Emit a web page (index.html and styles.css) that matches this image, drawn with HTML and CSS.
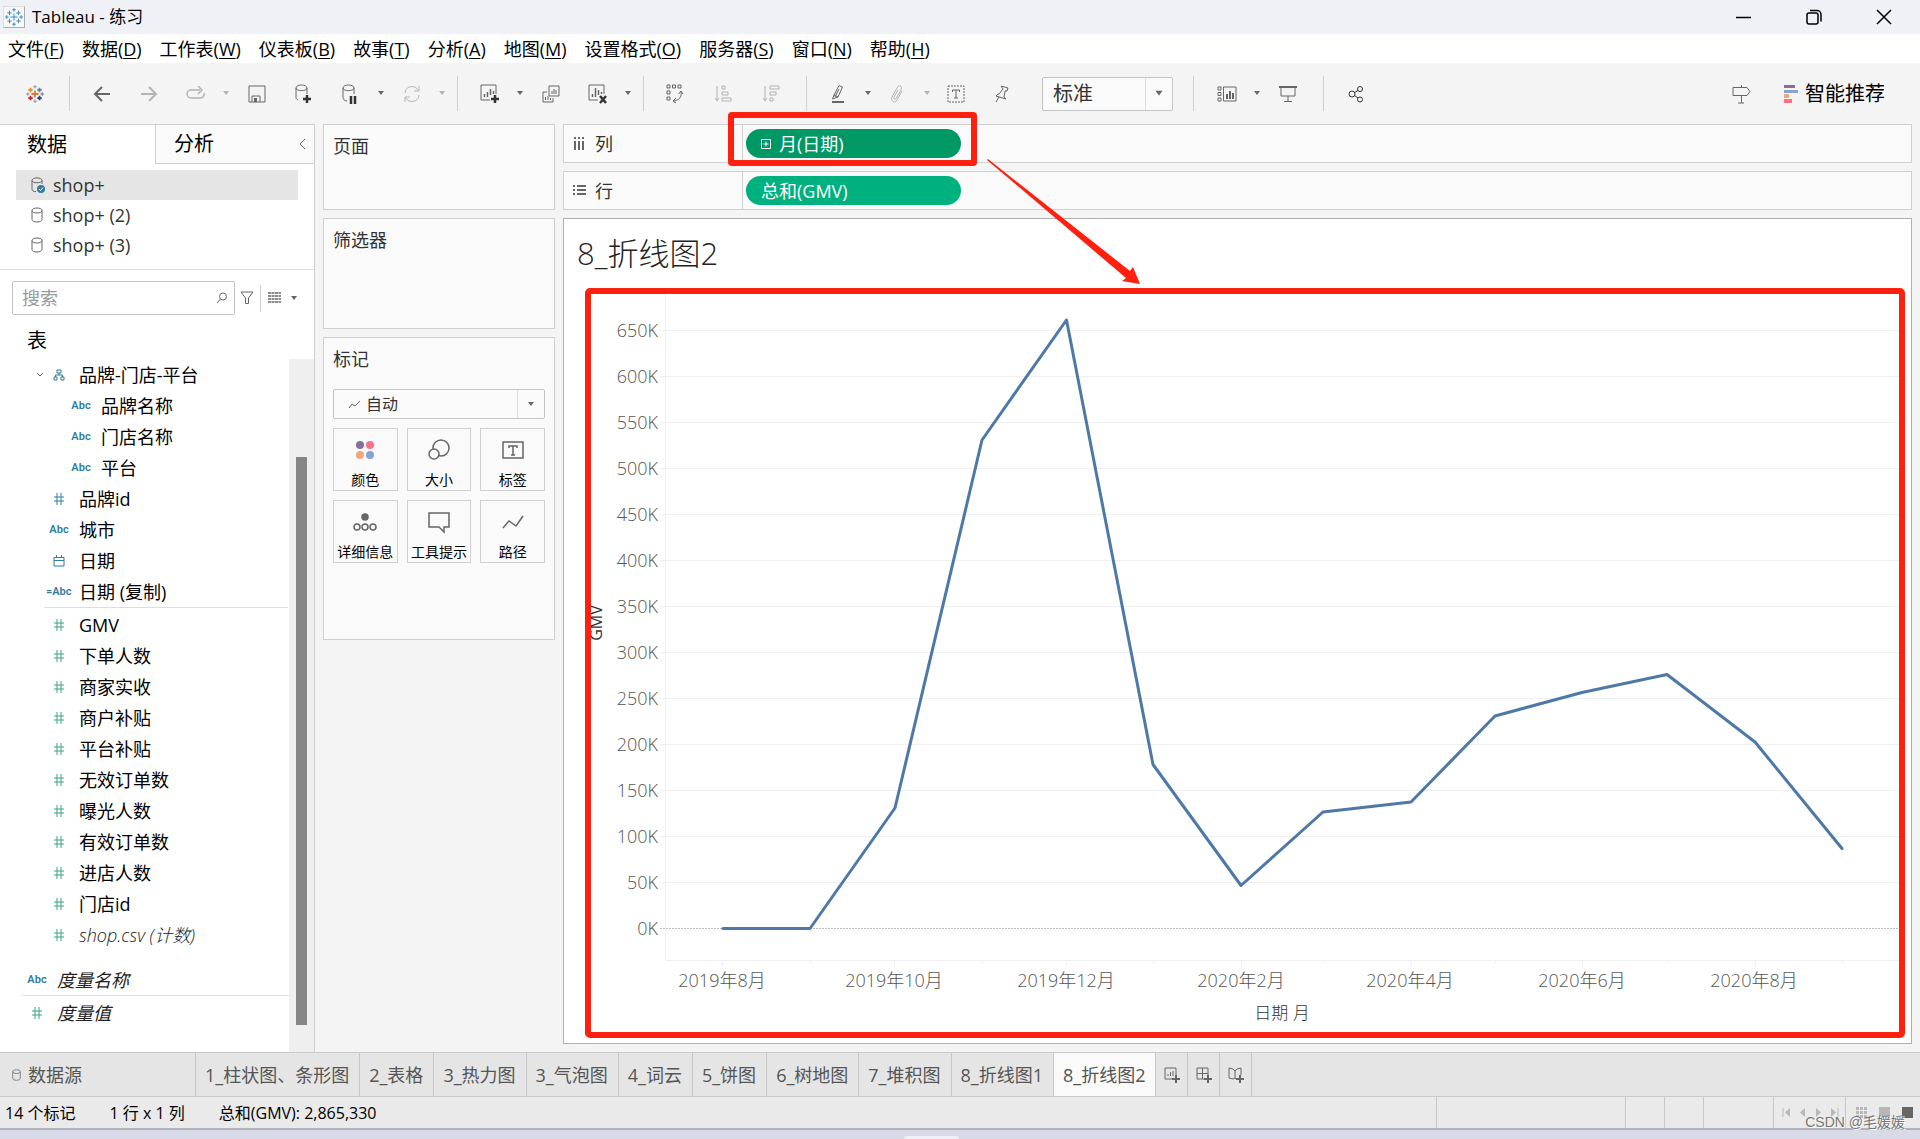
FILE: index.html
```html
<!DOCTYPE html>
<html lang="zh-CN">
<head>
<meta charset="utf-8">
<title>Tableau - 练习</title>
<link rel="stylesheet" href="styles.css">
</head>
<body>
<svg class="defs" aria-hidden="true">
  <symbol id="i-hash" viewBox="0 0 12 14"><path d="M4 1v12M8 1v12M1 5h10M1 9h10"/></symbol>
  <symbol id="i-caret" viewBox="0 0 8 5"><path class="solid" d="M1 0h6L4 4z"/></symbol>
  <symbol id="i-db" viewBox="0 0 12 16"><path d="M1 3.500v9c0 1.500 2 2.500 5 2.500s5-1 5-2.500v-9M1 3.500C1 2 3 1 6 1s5 1 5 2.500S9 6 6 6 1 5 1 3.500z"/></symbol>
  <symbol id="i-logo" viewBox="0 0 20 20"><path d="M10 6v8M6 10h8M5 3v5M2.500 5.500h5M15 3v5M12.500 5.500h5M5 12v5M2.500 14.500h5M15 12v5M12.500 14.500h5M10 0v4M8 2h4M10 16v4M8 18h4M2 8v4M0 10h4M18 8v4M16 10h4"/></symbol>
</svg>

<header class="titlebar">
  <span class="appicon"><svg width="18" height="18"><use href="#i-logo"/></svg></span>
  <h1>Tableau - 练习</h1>
  <div class="winbtns">
    <button aria-label="最小化"><svg width="16" height="16"><path d="M0 8.500h15"/></svg></button>
    <button aria-label="还原"><svg width="16" height="16"><rect x="1" y="4" width="11" height="11" rx="2"/><path d="M4 1.500h7a4 4 0 0 1 4 4v7"/></svg></button>
    <button aria-label="关闭"><svg width="16" height="16"><path d="M1 1l14 14M15 1L1 15"/></svg></button>
  </div>
</header>

<nav class="menubar">
  <button>文件(<u>F</u>)</button><button>数据(<u>D</u>)</button><button>工作表(<u>W</u>)</button><button>仪表板(<u>B</u>)</button><button>故事(<u>T</u>)</button><button>分析(<u>A</u>)</button><button>地图(<u>M</u>)</button><button>设置格式(<u>O</u>)</button><button>服务器(<u>S</u>)</button><button>窗口(<u>N</u>)</button><button>帮助(<u>H</u>)</button>
</nav>

<div class="toolbar">
  <div class="group first">
    <button aria-label="起始页"><svg width="18" height="20" viewBox="0 0 20 20"><path stroke="#e8762c" stroke-width="2" d="M10 6v8M6 10h8"/><path stroke="#eb912c" stroke-width="2" d="M5 3v5M2.500 5.500h5"/><path stroke="#59879b" stroke-width="2" d="M15 3v5M12.500 5.500h5"/><path stroke="#c72035" stroke-width="2" d="M5 12v5M2.500 14.500h5"/><path stroke="#1f457e" stroke-width="2" d="M15 12v5M12.500 14.500h5"/><path stroke="#7199a6" d="M10 0v4M8 2h4M10 16v4M8 18h4M2 8v4M0 10h4"/><path stroke="#5b6591" d="M18 8v4M16 10h4"/></svg></button>
  </div>
  <div class="group">
    <button aria-label="后退"><svg width="18" height="16"><path stroke-width="2" d="M17 8H2M9 1L2 8l7 7"/></svg></button>
    <button class="dim" aria-label="前进"><svg width="18" height="16"><path stroke-width="2" d="M1 8h15M9 1l7 7-7 7"/></svg></button>
    <button class="dim" aria-label="重做"><svg width="20" height="16"><path stroke-width="1.500" d="M14 4H5a4 4 0 0 0 0 8h10a4 4 0 0 0 3-5M12 0l4 4-4 4"/></svg></button>
    <button class="drop dim" aria-label="重做选项"><svg width="8" height="5"><use href="#i-caret"/></svg></button>
    <button aria-label="保存"><svg width="18" height="18"><path d="M1 1h16v16H1zM4 17v-6h8v6"/><path stroke-width="3" d="M7.500 17v-4"/></svg></button>
    <button aria-label="新建数据源"><svg width="18" height="20"><path d="M3 16c-2-1-2-2-2-3V4c0-4 11-4 11 0v6M1 4c0 3.500 11 3.500 11 0"/><path class="bold" d="M12 11v8M8 15h8"/></svg></button>
    <button aria-label="暂停自动更新"><svg width="18" height="20"><path d="M5 17c-3 0-4-2-4-4V4c0-4 11-4 11 0v6M1 4c0 3.500 11 3.500 11 0"/><path class="bold" d="M9 12v8M13 12v8"/></svg></button>
    <button class="drop" aria-label="更新选项"><svg width="8" height="5"><use href="#i-caret"/></svg></button>
    <button class="dim" aria-label="运行更新"><svg width="18" height="18"><path d="M2 8a7 7 0 0 1 13-3M16 10a7 7 0 0 1-13 3M16 1v5h-5M2 17v-5h5"/></svg></button>
    <button class="drop dim" aria-label="运行选项"><svg width="8" height="5"><use href="#i-caret"/></svg></button>
  </div>
  <div class="group">
    <button aria-label="新建工作表"><svg width="20" height="20"><path d="M10 16H1V1h15v9"/><path d="M4.500 13v-3M7.500 13V8M10.500 11V5M13.500 10V7" stroke-width="1.500"/><path class="bold" d="M15 11v8M11 15h8"/></svg></button>
    <button class="drop" aria-label="新建选项"><svg width="8" height="5"><use href="#i-caret"/></svg></button>
    <button aria-label="复制"><svg width="18" height="18"><path d="M7 1h10v10H7zM5 7H1v10h10v-4M3.500 15v-3M6 15v-4M8.500 15v-2M10 9V6M12 9V4M14 9V5"/></svg></button>
    <button aria-label="清除工作表"><svg width="20" height="20"><path d="M10 16H1V1h15v9"/><path d="M4.500 13v-3M7.500 13V4M10.500 11V6M13.500 10V8" stroke-width="1.500"/><path class="bold" d="M12 12l6 7M18 12l-6 7"/></svg></button>
    <button class="drop" aria-label="清除选项"><svg width="8" height="5"><use href="#i-caret"/></svg></button>
  </div>
  <div class="group wide">
    <button aria-label="交换行和列"><svg width="18" height="20"><path d="M1 1h3v3H1zM6.500 1h3v3h-3zM12 1h3v3h-3zM1 7h3v3H1zM1 13h3v3H1zM15 8c1 5-2 8-7 9M12.500 10L15 7l2 3M10 14l-3 3 3 2"/></svg></button>
    <button class="dim" aria-label="升序排序"><svg width="18" height="18"><path d="M3 1v14M1 13l2 3 2-3M8 1h3v3H8zM8 7h6v3H8zM8 13h9v3H8z"/></svg></button>
    <button class="dim" aria-label="降序排序"><svg width="18" height="18"><path d="M3 1v14M1 13l2 3 2-3M8 1h9v3H8zM8 7h6v3H8zM8 13h3v3H8z"/></svg></button>
  </div>
  <div class="group tight">
    <button aria-label="突出显示"><svg width="16" height="20"><path d="M4 11L9 1.500l3.500 1.500L8 13zM4 11l-1.500 4L8 13M5 13l4-8"/><path stroke-width="2" d="M2 18h12"/></svg></button>
    <button class="drop" aria-label="突出显示选项"><svg width="8" height="5"><use href="#i-caret"/></svg></button>
    <button class="dim" aria-label="组成员"><svg width="16" height="18"><path d="M9 5L5 12c-1 2 1 3 2 1.500L12 5c2-4-2-6-4-2L3 12c-2 4 3 7 5 3l5-9"/></svg></button>
    <button class="drop dim" aria-label="分组选项"><svg width="8" height="5"><use href="#i-caret"/></svg></button>
    <button aria-label="显示标记标签"><svg width="18" height="18"><rect x="1" y="1" width="16" height="16" stroke-dasharray="2 1"/><path d="M5.500 7V5h7v2M9 5v8M7 13h4"/></svg></button>
    <button aria-label="固定轴"><svg width="18" height="18"><path d="M8 1l7 2-1 3-2 0-1 6 2 2-10-3 2-2 1 0 4-5zM6 12l-3 5"/></svg></button>
    <div class="fit">
      <select aria-label="适合"><option>标准</option></select>
      <svg width="10" height="7" viewBox="0 0 8 5"><use href="#i-caret"/></svg>
    </div>
  </div>
  <div class="group cardsgroup">
    <button aria-label="显示卡"><svg width="20" height="16"><path d="M1 1h3v3H1zM1 6.500h3v3H1zM1 12h3v3H1zM6.500 1H19v14H6.500z"/><path stroke-width="2" d="M10 13V8M13 13V5M16 13V7"/></svg></button>
    <button class="drop" aria-label="卡选项"><svg width="8" height="5"><use href="#i-caret"/></svg></button>
    <button aria-label="演示模式"><svg width="18" height="18"><path stroke-width="2" d="M0 2h18"/><path d="M2 3v8h14V3M9 11v5M5 16.500h8"/></svg></button>
  </div>
  <div class="group">
    <button aria-label="共享"><svg class="share" width="16" height="18"><circle cx="4" cy="9" r="3"/><circle cx="12" cy="4" r="2.500"/><circle cx="12" cy="14.500" r="2.500"/><path d="M6.500 7.500L10 5.500M6.500 10.500L10 13"/></svg></button>
  </div>
  <div class="smart">
    <button aria-label="指南"><svg width="20" height="20"><path d="M1 3.500h14l3 4-3 4H1zM9.500 1v2M9.500 12v7M6 19h6"/></svg></button>
    <button class="showme"><svg width="14" height="18"><path fill="#876f9a" d="M0 0h11v3H0z"/><path fill="#85a5cf" d="M0 5h14v3H0z"/><path fill="#f3a67e" d="M0 9h5v4H0z"/><path fill="#fb7185" d="M0 14h8v4H0z"/></svg>智能推荐</button>
  </div>
</div>

<main class="workspace">
  <aside class="datapane">
    <div class="panetabs">
      <button class="on">数据</button><button>分析<svg width="8" height="12"><path d="M7 1L2 6l5 5"/></svg></button>
    </div>
    <ul class="sources">
      <li class="on"><svg width="14" height="16"><path d="M5 14.500c-3 0-4-1-4-2V3.500C1 0 11 0 11 3.500V7M1 3.500C1 6.500 11 6.500 11 3.500"/><circle cx="10" cy="12" r="4" fill="#2f7c9e" stroke="none"/><path stroke="#fff" d="M8 12l1.500 1.500L12 10.500"/></svg>shop+</li>
      <li><svg width="14" height="16"><use href="#i-db" width="12" height="16"/></svg>shop+ (2)</li>
      <li><svg width="14" height="16"><use href="#i-db" width="12" height="16"/></svg>shop+ (3)</li>
    </ul>
    <div class="search">
      <div class="searchbox"><input type="text" placeholder="搜索" aria-label="搜索"><svg width="12" height="12"><circle cx="7" cy="4.500" r="3.500"/><path d="M4.500 7L1 11"/></svg></div>
      <button aria-label="筛选"><svg width="14" height="14"><path d="M1 1h12L8.500 7v5.500h-3V7z"/></svg></button>
      <button class="listmode" aria-label="查看"><svg width="13" height="12"><path stroke-width="1.500" stroke-dasharray="3 .5" d="M0 1h13M0 4h13M0 7h13M0 10h13"/></svg><svg width="8" height="5"><use href="#i-caret"/></svg></button>
    </div>
    <h2>表</h2>
    <div class="scroller">
      <div class="fields">
        <ul class="dims">
          <li class="folder"><svg class="chev" width="9" height="6"><path d="M1 1l3 3 3-3"/></svg><i><svg width="12" height="12"><path d="M4 1h4v3H4zM1 8h3v3H1zM8 8h3v3H8zM6 4v2M2.500 8V6h7v2"/></svg></i>品牌-门店-平台</li>
          <li class="child"><i>Abc</i>品牌名称</li>
          <li class="child"><i>Abc</i>门店名称</li>
          <li class="child"><i>Abc</i>平台</li>
          <li><i><svg width="12" height="14"><use href="#i-hash"/></svg></i>品牌id</li>
          <li><i>Abc</i>城市</li>
          <li><i><svg width="12" height="12"><path d="M1 2.500h10v8.500H1zM1 5.500h10M3.500 0v2M8.500 0v2"/></svg></i>日期</li>
          <li><i class="calc">=Abc</i>日期 (复制)</li>
        </ul>
        <ul class="measures">
          <li><i><svg width="12" height="14"><use href="#i-hash"/></svg></i>GMV</li>
          <li><i><svg width="12" height="14"><use href="#i-hash"/></svg></i>下单人数</li>
          <li><i><svg width="12" height="14"><use href="#i-hash"/></svg></i>商家实收</li>
          <li><i><svg width="12" height="14"><use href="#i-hash"/></svg></i>商户补贴</li>
          <li><i><svg width="12" height="14"><use href="#i-hash"/></svg></i>平台补贴</li>
          <li><i><svg width="12" height="14"><use href="#i-hash"/></svg></i>无效订单数</li>
          <li><i><svg width="12" height="14"><use href="#i-hash"/></svg></i>曝光人数</li>
          <li><i><svg width="12" height="14"><use href="#i-hash"/></svg></i>有效订单数</li>
          <li><i><svg width="12" height="14"><use href="#i-hash"/></svg></i>进店人数</li>
          <li><i><svg width="12" height="14"><use href="#i-hash"/></svg></i>门店id</li>
          <li><i><svg width="12" height="14"><use href="#i-hash"/></svg></i><em>shop.csv (计数)</em></li>
        </ul>
        <ul class="generated">
          <li><i>Abc</i><em>度量名称</em></li>
          <li class="measure"><i><svg width="12" height="14"><use href="#i-hash"/></svg></i><em>度量值</em></li>
        </ul>
      </div>
      <div class="track"><div class="thumb"></div></div>
    </div>
  </aside>

  <section class="cards">
    <div class="card pages"><h3>页面</h3></div>
    <div class="card filters"><h3>筛选器</h3></div>
    <div class="card marks">
      <h3>标记</h3>
      <div class="marktype">
        <svg class="kind" width="13" height="9"><path d="M1 8l3-4 3 2 5-5"/></svg>
        <select aria-label="标记类型"><option>自动</option></select>
        <svg class="arrow" width="8" height="5"><use href="#i-caret"/></svg>
      </div>
      <div class="tiles">
        <button><svg width="24" height="24"><g stroke="none"><circle cx="7" cy="7" r="4" fill="#876f9a"/><circle cx="17" cy="7" r="4" fill="#fb7185"/><circle cx="7" cy="17" r="4" fill="#f3a67e"/><circle cx="17" cy="17" r="4" fill="#85a5cf"/></g></svg>颜色</button>
        <button><svg width="24" height="24"><circle cx="14" cy="10" r="8"/><circle cx="7" cy="16" r="5" fill="#fafafa"/></svg>大小</button>
        <button><svg width="24" height="24"><path d="M2 4h20v16H2zM8 10V8h8v2M12 8v9M10 17h4"/></svg>标签</button>
        <button><svg width="24" height="24"><circle cx="12" cy="7" r="3" fill="#666"/><circle cx="4" cy="17" r="3"/><circle cx="12" cy="17" r="3"/><circle cx="20" cy="17" r="3"/></svg>详细信息</button>
        <button><svg width="24" height="24"><path d="M2 3h20v14h-5v5l-5-5H2z"/></svg>工具提示</button>
        <button><svg width="24" height="24"><path d="M2 18l6-7 7 5 7-10"/></svg>路径</button>
      </div>
    </div>
  </section>

  <section class="view">
    <div class="shelf">
      <div class="shelfname"><svg width="13" height="13"><path stroke-width="2" d="M2 0v2M6 0v2M10 0v2M2 4v9M6 4v9M10 4v9"/></svg>列</div>
      <button class="pill dark"><svg width="10" height="10"><path d="M.5.5h9v9h-9zM5 2.500v5M2.500 5h5"/></svg>月(日期)</button>
      <span class="callout"></span>
      <svg class="pointer" width="158" height="130"><path d="M0 3L139 121 135 124 153 127 146 110 143 114 1 2z"/></svg>
    </div>
    <div class="shelf">
      <div class="shelfname"><svg width="13" height="13"><path stroke-width="2" d="M0 2h2M0 6h2M0 10h2M4 2h9M4 6h9M4 10h9"/></svg>行</div>
      <button class="pill">总和(GMV)</button>
    </div>
    <div class="sheet">
      <h2>8_折线图2</h2>
      <div class="chart">
        <svg viewBox="0 0 1320 749" role="img" aria-label="GMV 按月折线图">
          <path class="grid" d="M75 42.500H1314M75 88.500H1314M75 134.500H1314M75 180.500H1314M75 226.500H1314M75 272.500H1314M75 318.500H1314M75 364.500H1314M75 410.500H1314M75 456.500H1314M75 502.500H1314M75 548.500H1314M75 594.500H1314M80.500 0V672.500H1314"/>
          <path class="grid" d="M137.500 672v6M225.500 672v3M309.500 672v6M397.500 672v3M481.500 672v6M568.500 672v3M656.500 672v6M738.500 672v3M826.500 672v6M910.500 672v3M997.500 672v6M1082.500 672v3M1170.500 672v6M1257.500 672v3"/>
          <path class="zero" d="M75 640.500H1314"/>
          <g class="ylab">
            <text x="73" y="49">650K</text><text x="73" y="95">600K</text><text x="73" y="141">550K</text><text x="73" y="187">500K</text><text x="73" y="233">450K</text><text x="73" y="279">400K</text><text x="73" y="325">350K</text><text x="73" y="371">300K</text><text x="73" y="417">250K</text><text x="73" y="463">200K</text><text x="73" y="509">150K</text><text x="73" y="555">100K</text><text x="73" y="601">50K</text><text x="73" y="647">0K</text>
          </g>
          <g class="xlab">
            <text x="137" y="699">2019年8月</text><text x="309" y="699">2019年10月</text><text x="481" y="699">2019年12月</text><text x="656" y="699">2020年2月</text><text x="825" y="699">2020年4月</text><text x="997" y="699">2020年6月</text><text x="1169" y="699">2020年8月</text>
            <text class="axis" x="697" y="731">日期 月</text>
          </g>
          <text class="ytitle" transform="rotate(-90 17 335)" x="17" y="335">GMV</text>
          <path class="line" d="M138 640.500H225L310 520 397 152 481.500 32 568 476.500 656 597.500 738 524 826 514 910 428 997 404.500 1082 386.500 1170 454 1257 560.500"/>
        </svg>
        <span class="frame"></span>
      </div>
    </div>
  </section>
</main>

<nav class="sheettabs">
  <button class="source"><svg width="9" height="12" viewBox="0 0 12 16"><use href="#i-db"/></svg>数据源</button>
  <button>1_柱状图、条形图</button><button>2_表格</button><button>3_热力图</button><button>3_气泡图</button><button>4_词云</button><button>5_饼图</button><button>6_树地图</button><button>7_堆积图</button><button>8_折线图1</button><button class="on">8_折线图2</button>
  <button class="new" aria-label="新建工作表"><svg width="16" height="16"><path d="M8 12H1V1h11v7M4 9V7M6.500 9V5M9 9V4"/><path stroke-width="2" d="M12 8v8M8 12h8"/></svg></button>
  <button class="new" aria-label="新建仪表板"><svg width="16" height="16"><path d="M8 12H1V1h11v7M1 6.500h11M6.500 1v11"/><path stroke-width="2" d="M12 8v8M8 12h8"/></svg></button>
  <button class="new" aria-label="新建故事"><svg width="16" height="16"><path d="M8 12l-1-1-2 1-4-1V1l4 1 2 2 2-2 4-1v7M7 4v7"/><path stroke-width="2" d="M12 8v8M8 12h8"/></svg></button>
</nav>

<footer class="status">
  <span>14 个标记</span><span>1 行 x 1 列</span><span>总和(GMV): 2,865,330</span>
  <div class="cells">
    <b class="c1"></b><b></b><b></b><b class="c2"></b>
    <div class="pager">
      <svg width="9" height="9"><path d="M1 0v9"/><path class="solid" d="M8 0v9L3 4.500z"/></svg>
      <svg width="9" height="9"><path class="solid" d="M7 0v9L2 4.500z"/></svg>
      <svg width="9" height="9"><path class="solid" d="M2 0v9l5-4.500z"/></svg>
      <svg width="9" height="9"><path d="M8 0v9"/><path class="solid" d="M1 0v9l5-4.500z"/></svg>
    </div>
    <div class="modes">
      <svg width="11" height="11"><path class="solid" d="M0 0h3v3H0zM4 0h3v3H4zM8 0h3v3H8zM0 4h3v3H0zM4 4h3v3H4zM8 4h3v3H8zM0 8h3v3H0zM4 8h3v3H4zM8 8h3v3H8z"/></svg>
      <svg width="11" height="11"><path class="solid" d="M0 0h11v11H0z"/></svg>
      <svg class="now" width="11" height="11"><path class="solid" d="M0 0h11v11H0z"/></svg>
    </div>
  </div>
  <span class="credit">CSDN @毛媛媛</span>
</footer>
<div class="desktop"><i></i></div>
</body>
</html>
```
FILE: styles.css
```css
* { box-sizing: border-box; }
body {
  margin: 0;
  min-height: 100vh;
  display: flex;
  flex-direction: column;
  background: #f4f4f4;
  color: #000;
  font: 18px/24px "Open Sans", "Noto Sans CJK SC", sans-serif;
}
button, select, input { font: inherit; color: inherit; border: 0; background: none; padding: 0; margin: 0; }
h1, h2, h3, ul { margin: 0; padding: 0; font-size: 18px; font-weight: 400; list-style: none; }
svg { fill: none; stroke: #666; flex: none; display: block; }
.solid { fill: #666; stroke: none; }
.defs { position: absolute; width: 0; height: 0; }

/* window chrome */
.titlebar { display: flex; align-items: center; height: 34px; padding-left: 3px; background: #f0f1f7; }
.titlebar h1 { font-size: 17px; margin-left: 7px; flex: 1; }
.appicon { width: 22px; height: 22px; display: grid; place-items: center; background: #f8f8f8; border: 1px solid #ddd; border-right-color: #aaa; border-bottom-color: #aaa; }
.appicon svg { stroke: #2c85bd; }
.winbtns { display: flex; padding-right: 1px; }
.winbtns button { width: 70px; display: grid; place-items: center; }
.winbtns svg { stroke: #000; stroke-width: 1.500; }
.menubar { display: flex; gap: 18px; height: 29px; padding-left: 8px; background: #fff; align-items: center; }
.menubar u { text-underline-offset: 2px; text-decoration-thickness: 1px; }

/* toolbar */
.toolbar { display: flex; align-items: center; height: 61px; }
.group { display: flex; align-items: center; height: 35px; padding: 0 8px; border-right: 1px solid #cfcfcf; }
.group button { width: 47px; height: 35px; display: grid; place-items: center; }
.group.first { padding: 0 11px; }
.group.wide { padding: 0 11px 0 7px; }
.group.wide button { width: 48px; }
.group.tight button { width: 46px; }
.group .drop { width: 14px; }
.group.tight .drop { width: 13px; }
.group.cardsgroup { padding: 0 12px 0 9px; }
.group:nth-child(7) { border: 0; }
.dim { opacity: .45; }
.share { stroke: #333; }
.toolbar .bold { stroke: #333; stroke-width: 2.500; }
.fit { display: grid; grid-template-columns: 1fr 26px; align-items: center; justify-items: center; width: 131px; height: 34px; margin: 0 12px 0 17px; border: 1px solid #c4c4c4; border-radius: 2px; background: #fafafa; }
.fit select { appearance: none; width: 100%; height: 32px; padding-left: 10px; font-size: 20px; color: #333; border-right: 1px solid #ddd; }
.smart { margin-left: auto; display: flex; align-items: center; gap: 32px; padding-right: 35px; }
.showme { display: flex; align-items: center; gap: 7px; font-size: 20px; }
.showme svg { stroke: none; }

/* workspace */
.workspace { flex: 1; display: flex; gap: 8px; padding-right: 8px; }
.datapane { width: 315px; flex: none; display: flex; flex-direction: column; background: #fff; border: 1px solid #d0d0d0; border-width: 1px 1px 0 0; }
.panetabs { display: flex; height: 39px; font-size: 20px; }
.panetabs button { text-align: left; flex: 1; padding: 0 8px 0 18px; background: #fafafa; border: 1px solid #d0d0d0; border-width: 0 0 1px 1px; display: flex; align-items: center; justify-content: space-between; }
.panetabs .on { flex: none; width: 155px; padding-left: 27px; background: #fff; border: 0; }
.sources { padding: 6px 16px 9px 16px; height: 106px; border-bottom: 1px solid #ddd; color: #333; }
.sources li { display: flex; align-items: center; gap: 7px; height: 30px; padding-left: 15px; }
.sources svg { margin-right: 1px; }
.sources .on { background: #e5e5e5; }
.search { display: flex; align-items: center; padding: 10px 20px 0 12px; height: 46px; }
.searchbox { width: 223px; height: 34px; display: flex; align-items: center; padding: 0 6px 0 9px; border: 1px solid #c4c4c4; border-radius: 2px; margin-right: 5px; }
.searchbox input { flex: 1; min-width: 0; outline: 0; }
.searchbox input::placeholder { color: #999; }
.listmode { display: flex; align-items: center; gap: 9px; height: 27px; margin-left: 6px; padding-left: 7px; border-left: 1px solid #ccc; }
.datapane h2 { height: 43px; padding: 0 27px; font-size: 20px; line-height: 50px; }
.scroller { flex: 1; display: flex; }
.fields { flex: 1; min-width: 0; }
.fields li { display: flex; align-items: center; height: 31px; padding-left: 44px; white-space: nowrap; }
.fields .child { padding-left: 66px; }
.fields i { width: 30px; margin-right: 5px; display: flex; justify-content: center; font: 600 11px/14px Roboto, sans-serif; color: #2f7c9e; }
.fields i.calc { justify-content: flex-start; padding-left: 2px; }
.fields i svg { stroke: #2f7c9e; stroke-width: 1; }
.fields .folder { padding-left: 36px; }
.fields .chev { margin-right: -1px; }
.fields em { color: #222; font-weight: 300; }
.fields .generated em { font-weight: 400; }
.dims { margin-right: 1px; }
.dims::after { content: ""; display: block; margin-left: 44px; border-bottom: 1px solid #ddd; }
.measures { padding-top: 1px; }
.measures i svg, .fields .measure i svg { stroke: #3ba67c; }
.generated { padding: 14px 0 10px; }
.generated li { padding-left: 22px; }
.generated .measure { margin-left: 22px; padding-left: 0; border-top: 1px solid #ddd; height: 35px; }
.track { width: 25px; background: #efefef; padding: 98px 7px 27px; display: flex; }
.thumb { flex: 1; background: #868686; }

/* shelves and marks */
.cards { width: 232px; flex: none; display: flex; flex-direction: column; gap: 8px; }
.card { background: #fafafa; border: 1px solid #d0d0d0; padding: 9px 9px 10px; color: #333; }
.pages { height: 86px; }
.filters { height: 111px; }
.marks { height: 303px; }
.marktype { display: grid; grid-template-columns: 32px 1fr 26px; align-items: center; height: 30px; margin-top: 18px; border: 1px solid #c4c4c4; border-radius: 2px; }
.marktype select { appearance: none; font-size: 16px; height: 28px; border-right: 1px solid #ddd; }
.marktype .kind { justify-self: center; margin-left: 8px; }
.marktype .arrow { justify-self: center; }
.tiles { display: grid; grid-template-columns: repeat(3, 1fr); gap: 9px; margin-top: 9px; }
.tiles button { height: 63px; display: flex; flex-direction: column; align-items: center; justify-content: space-between; padding: 9px 0 0; border: 1px solid #d0d0d0; font-size: 14px; line-height: 20px; color: #000; white-space: nowrap; }
.tiles svg { stroke-width: 1.500; }

.view { flex: 1; min-width: 0; display: flex; flex-direction: column; gap: 8px; }
.shelf { position: relative; display: flex; align-items: center; height: 39px; background: #fafafa; border: 1px solid #d0d0d0; }
.shelfname { width: 179px; height: 37px; display: flex; align-items: center; gap: 9px; padding-left: 9px; border-right: 1px solid #d0d0d0; color: #333; }
.pill { display: flex; align-items: center; gap: 8px; width: 215px; height: 29px; margin-left: 3px; padding-left: 15px; border-radius: 15px; background: #00b180; color: #fff; }
.pill.dark { background: #009966; }
.pill svg { stroke: #fff; }
.callout { position: absolute; left: 164px; top: -13px; width: 249px; height: 54px; border: 6px solid #ff2010; border-radius: 4px; }
.pointer { position: absolute; left: 423px; top: 32px; z-index: 1; stroke: none; fill: #ff2010; }
.sheet { flex: 1; display: flex; flex-direction: column; background: #fff; border: 1px solid #b0b0b0; padding: 14px 6px 5px 21px; }
.sheet h2 { margin-left: -8px; height: 55px; font-size: 31px; line-height: 40px; font-weight: 300; color: #222; }
.chart { position: relative; flex: 1; }
.chart > svg { width: 100%; height: auto; stroke: none; }
.frame { position: absolute; inset: 0; border: 6px solid #ff2010; border-radius: 5px; }
.grid { stroke: #f0f0f0; }
.zero { stroke: #bbb; stroke-dasharray: 2 1; }
.line { stroke: #4e79a7; stroke-width: 3; stroke-linejoin: round; stroke-linecap: round; }
.chart text { font-size: 18px; font-weight: 300; fill: #555; }
.ylab { text-anchor: end; }
.xlab { text-anchor: middle; }
.chart .axis { fill: #333; font-size: 17px; }
.chart .ytitle { fill: #333; font-size: 16px; font-weight: 400; text-anchor: middle; }

/* sheet tabs and status */
.view, .cards { padding-bottom: 8px; }
.sheettabs { display: flex; height: 45px; background: #e5e5e5; border: 1px solid #c8c8c8; border-width: 1px 0; color: #555; }
.sheettabs button { padding: 0 10px 0 9px; border-right: 1px solid #c8c8c8; white-space: nowrap; }
.sheettabs .source { display: flex; align-items: center; gap: 7px; width: 196px; padding-left: 12px; }
.sheettabs .on { background: #fafafa; }
.sheettabs .new { width: 32px; padding: 0; display: grid; place-items: center; }
.status { position: relative; display: flex; align-items: center; gap: 34px; height: 33px; padding-left: 5px; background: #eaeaea; border-bottom: 2px solid #aeb0ba; font-size: 16px; }
.cells { margin-left: auto; display: flex; height: 31px; }
.cells b { width: 39px; border-left: 1px solid #c8c8c8; }
.cells .c1 { width: 189px; }
.cells .c2 { width: 70px; }
.pager, .modes { display: flex; align-items: center; border-left: 1px solid #c8c8c8; }
.pager { width: 72px; gap: 7px; padding-left: 8px; }
.modes { width: 75px; gap: 12px; padding-left: 10px; }
.pager svg { stroke: #b8b8b8; }
.cells .solid { fill: #b8b8b8; }
.cells .now .solid { fill: #666; }
.credit { position: absolute; right: 15px; bottom: -4px; font: 14px/20px "Liberation Sans", "Noto Sans CJK SC", sans-serif; color: #777; text-shadow: 1px 1px 0 #fff; }
.desktop { height: 9px; background: #d8dae8; overflow: hidden; }
.desktop i { display: block; width: 55px; height: 6px; margin: 6px auto 0; border-radius: 4px; background: #eff0f8; position: relative; left: -29px; }
```
